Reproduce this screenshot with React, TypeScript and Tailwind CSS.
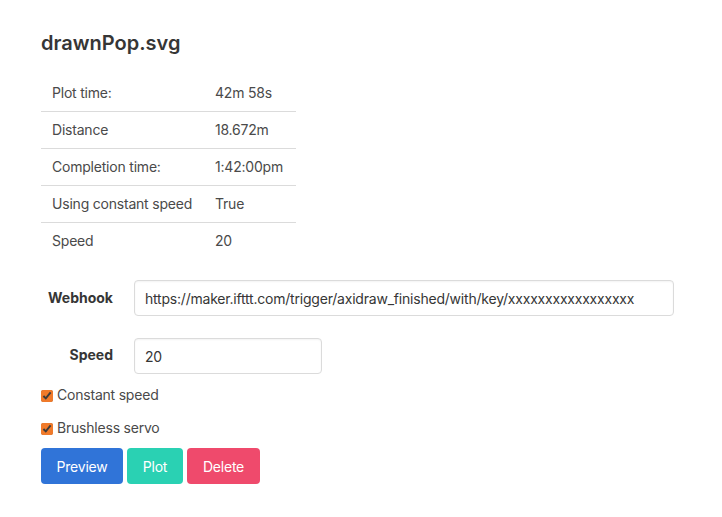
import React from "react";

const rows: [string, string][] = [
  ["Plot time:", "42m 58s"],
  ["Distance", "18.672m"],
  ["Completion time:", "1:42:00pm"],
  ["Using constant speed", "True"],
  ["Speed", "20"],
];

export default function App() {
  return (
    <div
      className="min-h-[517px] w-[722px] bg-white pl-[41px] pt-[28px] text-[14px] tracking-[-0.015em] text-[#4a4a4a]"
      style={{ fontFamily: "Inter, 'Noto Sans', sans-serif" }}
    >
      <h1 className="text-[20px] font-semibold leading-[30px] tracking-normal text-[#363636]">drawnPop.svg</h1>
      <table className="mt-[16px] w-[255px] border-collapse">
        <tbody>
          {rows.map(([k, v], i) => (
            <tr key={k} className={i < rows.length - 1 ? "border-b border-[#dbdbdb]" : ""}>
              <td className="h-[37px] w-[163px] whitespace-nowrap px-[11px] align-middle leading-[21px]">{k}</td>
              <td className="h-[37px] whitespace-nowrap px-[11px] align-middle leading-[21px]">{v}</td>
            </tr>
          ))}
        </tbody>
      </table>
      <div className="mt-[21px] flex items-center">
        <label className="w-[72px] pb-[2px] text-right font-bold tracking-normal text-[#363636]">Webhook</label>
        <input
          readOnly
          value="https://maker.ifttt.com/trigger/axidraw_finished/with/key/xxxxxxxxxxxxxxxxx"
          className="ml-[21px] h-[36px] w-[540px] rounded-[4px] border border-[#dbdbdb] px-[10px] text-[14px] tracking-[-0.015em] text-[#363636] shadow-[inset_0_1px_2px_rgba(10,10,10,0.05)] outline-none"
        />
      </div>
      <div className="mt-[22px] flex items-center">
        <label className="w-[72px] pb-[3px] text-right font-bold tracking-normal text-[#363636]">Speed</label>
        <input
          readOnly
          value="20"
          className="ml-[21px] h-[36px] w-[188px] rounded-[4px] border border-[#dbdbdb] px-[10px] text-[14px] text-[#363636] shadow-[inset_0_1px_2px_rgba(10,10,10,0.05)] outline-none"
        />
      </div>
      <label className="mt-[10px] flex items-center leading-[21px]">
        <input type="checkbox" defaultChecked className="m-0 mt-[3px] h-[12px] w-[12px] accent-[#f07a2a]" />
        <span className="ml-[4px]">Constant speed</span>
      </label>
      <label className="mt-[12px] flex items-center leading-[21px]">
        <input type="checkbox" defaultChecked className="m-0 mt-[3px] h-[12px] w-[12px] accent-[#f07a2a]" />
        <span className="ml-[4px]">Brushless servo</span>
      </label>
      <div className="mt-[10px] flex gap-[4px]">
        <button className="h-[36px] w-[82px] rounded-[4px] bg-[#3074d8] text-white">Preview</button>
        <button className="h-[36px] w-[56px] rounded-[4px] bg-[#2ad1b3] text-white">Plot</button>
        <button className="h-[36px] w-[73px] rounded-[4px] bg-[#ef4a6c] text-white">Delete</button>
      </div>
    </div>
  );
}
